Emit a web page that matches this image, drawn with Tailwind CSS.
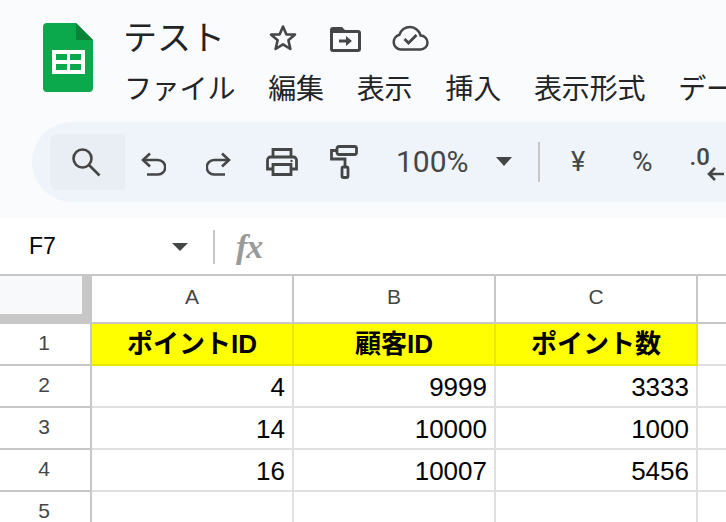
<!DOCTYPE html>
<html lang="ja">
<head>
    <meta charset="UTF-8">
    <title>テスト</title>
    <script src="https://cdn.jsdelivr.net/npm/@tailwindcss/browser@4"></script>
</head>
<body class="w-[726px] h-[522px] overflow-hidden bg-white font-['Liberation_Sans','Noto_Sans_CJK_JP',sans-serif]">
    <!-- Header -->
    <header class="h-[218px] bg-[#f9fbfd] overflow-hidden">
        <div class="flex h-[122px] pl-[43px]">
            <!-- Sheets logo -->
            <svg class="mt-[23px] w-[50px] h-[69px] shrink-0" viewBox="0 0 50 69">
                <path fill="#0ba94c" d="M4 0H33L50 17V65a4 4 0 0 1-4 4H4a4 4 0 0 1-4-4V4a4 4 0 0 1 4-4z"/>
                <path fill="#0a8238" d="M33 0L50 17H33z"/>
                <path fill="#ffffff" d="M9 27H42V51H9z"/>
                <path fill="#0ba94c" d="M13 31H24V37H13zM27 31H38V37H27zM13 41H24V47H13zM27 41H38V47H27z"/>
            </svg>
            <div class="ml-[31px] font-['Noto_Sans_CJK_JP',sans-serif] text-[#222426]">
                <div class="flex items-center h-[72px]">
                    <span class="text-[34px] leading-none w-[145px] -mt-[1px] -ml-[1px] mr-[1px]">テスト</span>
                    <svg class="w-[30px] h-[30px] mt-[4px] -ml-[1px]" viewBox="0 0 30 30" fill="none" stroke="#444746" stroke-width="2.6" stroke-linejoin="round"><path d="M15 3.5l3.4 8h8.6l-6.6 5.8 2 8.700L15 21.300l-7.400 4.700 2-8.700L3 11.500h8.600z"/></svg>
                    <svg class="ml-[32px] w-[31px] h-[26px] mt-[5px]" viewBox="0 0 31 26"><path fill="#444746" fill-rule="evenodd" d="M3 1h9l3 3h13a3 3 0 0 1 3 3v16a3 3 0 0 1-3 3H3a3 3 0 0 1-3-3V4a3 3 0 0 1 3-3zM3 7v16h25V7z"/><path fill="#444746" d="M9 13.500h7v-3.500l6 5-6 5v-3.500H9z"/></svg>
                    <svg class="ml-[31px] w-[37px] h-[26px] mt-[3px]" viewBox="0 0 37 26" fill="none" stroke="#444746" stroke-width="2.500"><path d="M9 24.500a7.500 7.500 0 0 1-1.500-14.800A11 11 0 0 1 18 2a11 11 0 0 1 10.500 8.500A7 7 0 0 1 28.500 24.500z"/><path stroke-width="2.800" d="M12.500 14l4 4 8-8"/></svg>
                </div>
                <nav class="flex text-[28px] leading-none gap-[33px] whitespace-nowrap mt-[1px] tracking-[-0.2px]">
                    <span>ファイル</span><span>編集</span><span>表示</span><span>挿入</span><span>表示形式</span><span>データ</span>
                </nav>
            </div>
        </div>
        <!-- Toolbar -->
        <div class="ml-[32px] h-[80px] w-[760px] rounded-l-[40px] bg-[#eff3fa] flex items-center pl-[18px]">
            <div class="w-[75px] h-[56px] bg-[#e9edf4] rounded-l-[8px] flex justify-center pt-[13px] pr-[4px] shrink-0">
                <svg class="w-[30px] h-[30px]" viewBox="0 0 30 30" fill="none" stroke="#444746" stroke-width="2.600"><circle cx="11.500" cy="11.500" r="9"/><path d="M18 18l10.500 10.500"/></svg>
            </div>
            <svg class="ml-[15px] mt-[4px] w-[26px] h-[24px] shrink-0" viewBox="0 0 26 24" fill="none" stroke="#444746" stroke-width="2.600"><path d="M10 1.500L3 8l7 6.500"/><path d="M3 8h15a5.500 5.500 0 0 1 0 14.500H7"/></svg>
            <svg class="ml-[40px] mt-[4px] w-[26px] h-[24px] shrink-0" viewBox="0 0 26 24" fill="none" stroke="#444746" stroke-width="2.600"><path d="M16 1.500L23 8l-7 6.500"/><path d="M23 8H8a5.500 5.500 0 0 0 0 14.500h11"/></svg>
            <svg class="ml-[34px] -mt-[1px] w-[32px] h-[28px] shrink-0" viewBox="0 0 32 28" fill="none" stroke="#444746" stroke-width="2.800"><path d="M7 9V1.500h18V9"/><path d="M7 21H1.500V12a3 3 0 0 1 3-3h23a3 3 0 0 1 3 3v9H25"/><path d="M7 16.500h18v10H7z"/><circle cx="25.500" cy="13" r="1.200" fill="#444746" stroke="none"/></svg>
            <svg class="ml-[32px] -mt-[1px] w-[28px] h-[34px] shrink-0" viewBox="0 0 28 34" fill="none" stroke="#444746" stroke-width="2.800"><rect x="7" y="1.500" width="19.500" height="8" rx="2"/><path d="M7 5.500H1.500V14H15v8"/><rect x="12" y="22" width="6" height="10.500" rx="1.500"/></svg>
            <span class="ml-[38px] w-[100px] text-[30px] leading-none font-['Roboto',sans-serif] text-[#444746] shrink-0">100%</span>
            <span class="w-0 h-0 border-x-[8px] border-t-[9px] border-x-transparent border-t-[#444746] -mt-[1px] shrink-0"></span>
            <span class="ml-[26px] w-[2px] h-[40px] bg-[#c7c7c7] shrink-0"></span>
            <span class="ml-[31px] w-[18px] text-[27px] leading-none text-[#444746] font-['Roboto',sans-serif] shrink-0">¥</span>
            <span class="ml-[43px] text-[28px] leading-none text-[#444746] font-['Roboto',sans-serif] shrink-0">%</span>
            <div class="relative ml-[37px] w-[40px] h-[40px] shrink-0 text-[#444746]">
                <span class="absolute left-0 top-[3px] text-[24px] leading-none font-medium font-['Roboto',sans-serif]">.0</span>
                <svg class="absolute left-[17px] top-[25px] w-[17px] h-[14px]" viewBox="0 0 17 14" fill="none" stroke="#444746" stroke-width="2.600"><path d="M17 7H2M8 1L2 7l6 6"/></svg>
            </div>
        </div>
    </header>

    <!-- Formula bar -->
    <div class="h-[56px] flex items-center bg-white pt-[1px]">
        <span class="ml-[29px] w-[143px] text-[23px] leading-none text-black">F7</span>
        <span class="w-0 h-0 border-x-[8px] border-t-[8px] border-x-transparent border-t-[#444746] shrink-0"></span>
        <span class="ml-[25px] w-[2px] h-[34px] bg-[#c7c7c7]"></span>
        <span class="ml-[21px] text-[34px] leading-none italic font-bold text-[#9a9a9a] font-['Liberation_Serif',serif] tracking-[-1px]">fx</span>
    </div>

    <!-- Grid -->
    <div class="grid grid-cols-[92px_202px_202px_202px_28px] grid-rows-[48px_42px_42px_42px_42px_42px] text-[26px] text-black border-t-2 border-[#c7c7c7]">
        <!-- Column headers -->
        <div class="bg-[#c7c7c7] pr-[8px] pb-[10px] border-r-2 border-[#c7c7c7]"><div class="h-full bg-[#f8f9fa]"></div></div>
        <div class="flex items-center justify-center pb-[4px] text-[21px] text-[#444746] border-r-2 border-b-2 border-[#c7c7c7]">A</div>
        <div class="flex items-center justify-center pb-[4px] text-[21px] text-[#444746] border-r-2 border-b-2 border-[#c7c7c7]">B</div>
        <div class="flex items-center justify-center pb-[4px] text-[21px] text-[#444746] border-r-2 border-b-2 border-[#c7c7c7]">C</div>
        <div class="border-b-2 border-[#c7c7c7]"></div>

        <!-- Row 1 -->
        <div class="flex items-center justify-center text-[21px] text-[#444746] border-r-2 border-b-2 border-[#c7c7c7] pr-[2px] pb-[3px]">1</div>
        <div class="flex items-center justify-center bg-[#ffff00] border-r-2 border-b-2 border-r-[#e8e800] border-b-[#e8e800] font-bold">ポイントID</div>
        <div class="flex items-center justify-center bg-[#ffff00] border-r-2 border-b-2 border-r-[#e8e800] border-b-[#e8e800] font-bold">顧客ID</div>
        <div class="flex items-center justify-center bg-[#ffff00] border-r-2 border-b-2 border-r-[#e8e800] border-b-[#e8e800] font-bold">ポイント数</div>
        <div class="border-b-2 border-[#e0e0e0]"></div>

        <!-- Row 2 -->
        <div class="flex items-center justify-center text-[21px] text-[#444746] border-r-2 border-b-2 border-[#c7c7c7] pr-[2px] pb-[3px]">2</div>
        <div class="flex items-center justify-end pr-[7px] pt-[3px] border-r-2 border-b-2 border-[#e0e0e0]">4</div>
        <div class="flex items-center justify-end pr-[7px] pt-[3px] border-r-2 border-b-2 border-[#e0e0e0]">9999</div>
        <div class="flex items-center justify-end pr-[7px] pt-[3px] border-r-2 border-b-2 border-[#e0e0e0]">3333</div>
        <div class="border-b-2 border-[#e0e0e0]"></div>

        <!-- Row 3 -->
        <div class="flex items-center justify-center text-[21px] text-[#444746] border-r-2 border-b-2 border-[#c7c7c7] pr-[2px] pb-[3px]">3</div>
        <div class="flex items-center justify-end pr-[7px] pt-[3px] border-r-2 border-b-2 border-[#e0e0e0]">14</div>
        <div class="flex items-center justify-end pr-[7px] pt-[3px] border-r-2 border-b-2 border-[#e0e0e0]">10000</div>
        <div class="flex items-center justify-end pr-[7px] pt-[3px] border-r-2 border-b-2 border-[#e0e0e0]">1000</div>
        <div class="border-b-2 border-[#e0e0e0]"></div>

        <!-- Row 4 -->
        <div class="flex items-center justify-center text-[21px] text-[#444746] border-r-2 border-b-2 border-[#c7c7c7] pr-[2px] pb-[3px]">4</div>
        <div class="flex items-center justify-end pr-[7px] pt-[3px] border-r-2 border-b-2 border-[#e0e0e0]">16</div>
        <div class="flex items-center justify-end pr-[7px] pt-[3px] border-r-2 border-b-2 border-[#e0e0e0]">10007</div>
        <div class="flex items-center justify-end pr-[7px] pt-[3px] border-r-2 border-b-2 border-[#e0e0e0]">5456</div>
        <div class="border-b-2 border-[#e0e0e0]"></div>

        <!-- Row 5 -->
        <div class="flex items-center justify-center text-[21px] text-[#444746] border-r-2 border-b-2 border-[#c7c7c7] pr-[2px] pb-[3px]">5</div>
        <div class="border-r-2 border-b-2 border-[#e0e0e0]"></div>
        <div class="border-r-2 border-b-2 border-[#e0e0e0]"></div>
        <div class="border-r-2 border-b-2 border-[#e0e0e0]"></div>
        <div class="border-b-2 border-[#e0e0e0]"></div>
    </div>
</body>
</html>
